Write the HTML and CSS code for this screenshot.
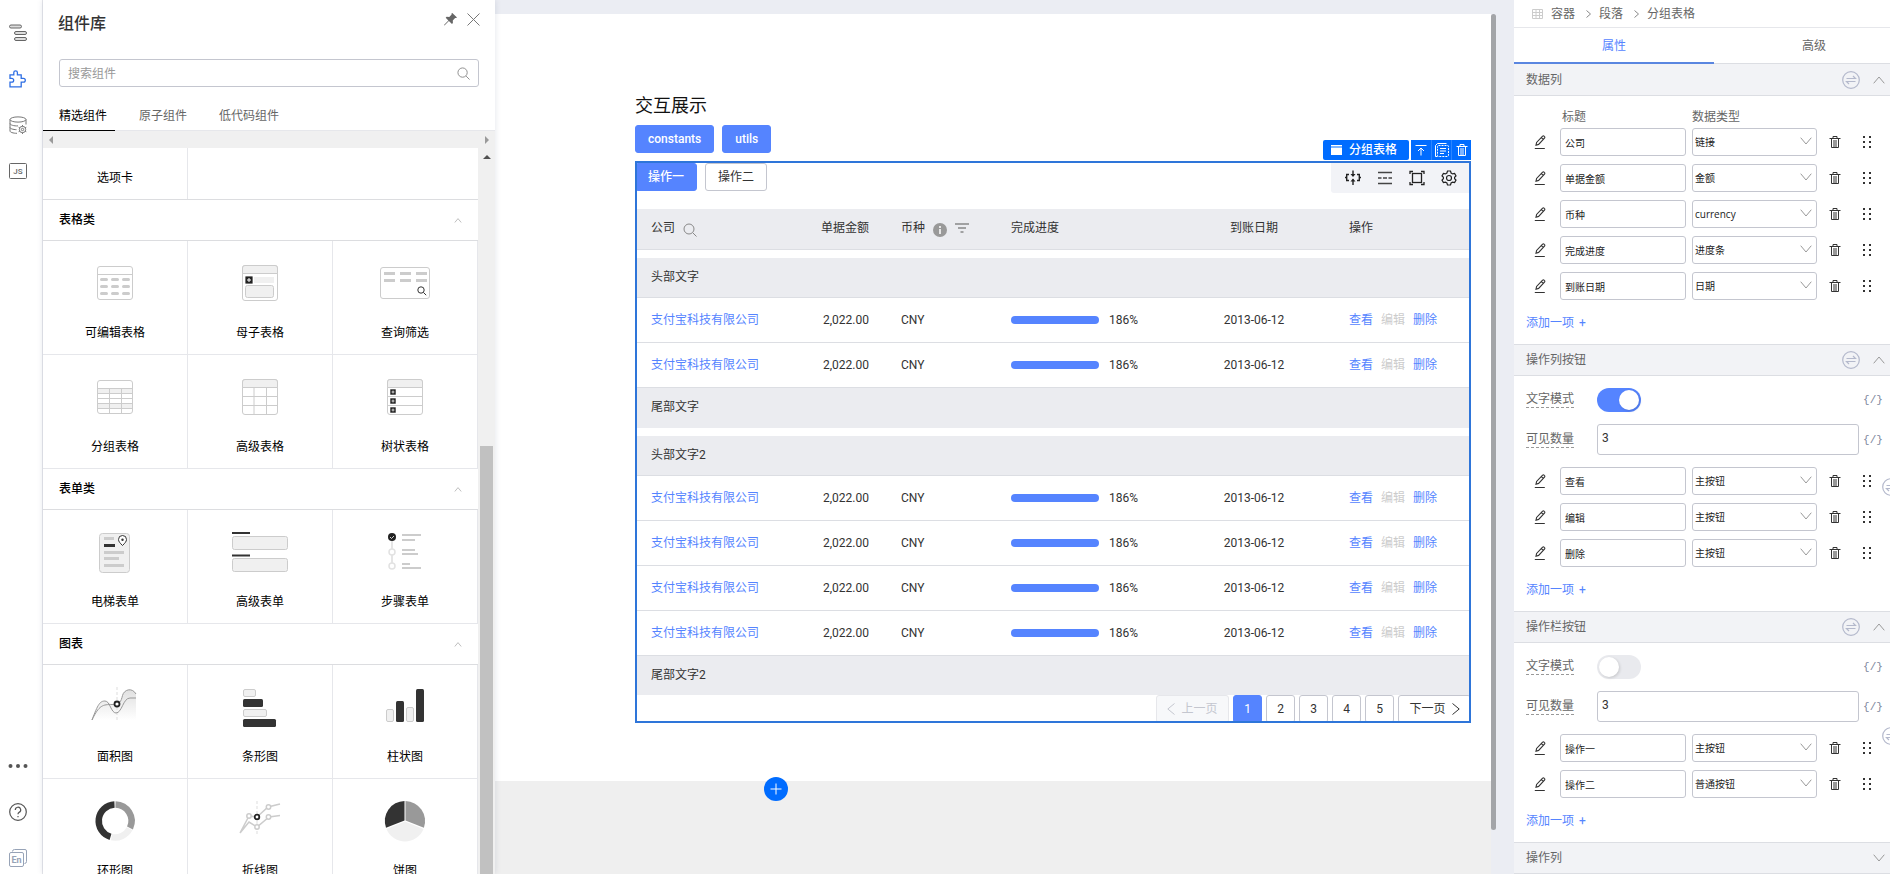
FILE: index.html
```html
<!DOCTYPE html>
<html lang="zh-CN">
<head>
<meta charset="utf-8">
<title>交互展示</title>
<link rel="stylesheet" href="styles.css">
</head>
<body>
<svg class="sprite" aria-hidden="true">
  <symbol id="i-pencil" viewBox="0 0 12 14"><path d="M2 10.2 2.6 7.4 8.6 1.2a1 1 0 0 1 1.5 0l.4.4a1 1 0 0 1 0 1.5L4.6 9.4 2 10.2zM7.4 2.6l1.8 1.8M.8 13.500h10" fill="none" stroke="currentColor" stroke-width="1.1"/></symbol>
  <symbol id="i-trash" viewBox="0 0 12 14"><path d="M.5 3.500h11M4 3.500V1.500h4v2M2.500 3.500v9h7v-9M5 5v7M7 5v7" fill="none" stroke="currentColor"/></symbol>
  <symbol id="i-dots" viewBox="0 0 10 14"><path d="M1 1h2v2H1zM7 1h2v2H7zM1 6h2v2H1zM7 6h2v2H7zM1 11h2v2H1zM7 11h2v2H7z" fill="currentColor"/></symbol>
  <symbol id="i-down" viewBox="0 0 12 8"><path d="M.7.7 6 7 11.300.7" fill="none" stroke="currentColor"/></symbol>
  <symbol id="i-up" viewBox="0 0 12 8"><path d="M.7 7.300 6 1l5.300 6.300" fill="none" stroke="currentColor"/></symbol>
  <symbol id="i-swap" viewBox="0 0 18 18"><g fill="none" stroke="currentColor"><circle cx="9" cy="9" r="8.300" stroke-width="1.200"/><path d="M4.500 7.500h9L11 5M13.500 10.500h-9L7 13" stroke-width="1.200"/></g></symbol>
  <symbol id="i-search" viewBox="0 0 14 14"><path d="M9.800 9.800 13.500 13.500" fill="none" stroke="currentColor"/><circle cx="6" cy="6" r="5" fill="none" stroke="currentColor"/></symbol>
  <symbol id="i-plusbox" viewBox="0 0 8 8"><rect width="8" height="8" rx="1" fill="#222"/><path d="M4 2v4M2 4h4" stroke="#fff"/></symbol>
</svg>
<div class="app">
  <nav class="rail" aria-label="工具">
    <button class="rail-btn" type="button" aria-label="大纲"><svg width="18" height="18" viewBox="0 0 18 18" fill="#ddd" stroke="#666"><rect x=".5" y="1" width="12" height="3" rx="1.500"/><rect x="5.500" y="7.500" width="12" height="3" rx="1.500"/><rect x="5.500" y="13.500" width="12" height="3" rx="1.500"/></svg></button>
    <button class="rail-btn" type="button" aria-label="组件"><svg width="18" height="18" viewBox="0 0 18 18" fill="none" stroke="#2f6fe4" stroke-width="1.300"><path d="M1 4.800h3.800V2.600a1.800 1.800 0 0 1 3.600 0v2.200h3.800v3.600h2.200a1.900 1.900 0 0 1 0 3.800h-2.200v4.600H1v-4.600h1.800a1.900 1.900 0 0 0 0-3.800H1z"/></svg></button>
    <button class="rail-btn" type="button" aria-label="数据源"><svg width="18" height="18" viewBox="0 0 18 18" fill="none" stroke="#777"><ellipse cx="9" cy="3.500" rx="8" ry="2.600"/><path d="M1 3.500v11.500c0 1.200 3 2.300 7 2.300M17 3.500v5M1 7.500c0 1.500 4 2.600 8 2.400M1 11.500c0 1.200 3 2 6.500 2.200"/><circle cx="13.500" cy="13.500" r="3.200"/><circle cx="13.500" cy="13.500" r="1.200"/><path d="M13.500 9v1.500M13.500 16.500V18M9.600 11.300l1.300.7M16 15l1.300.7M9.600 15.700l1.300-.7M16 12l1.300-.7"/></svg></button>
    <button class="rail-btn" type="button" aria-label="脚本"><svg width="18" height="16" viewBox="0 0 18 16"><rect x=".5" y=".5" width="17" height="15" rx="1" fill="none" stroke="#666"/><text x="9" y="11" text-anchor="middle" class="rail-js">JS</text></svg></button>
    <div class="rail-end">
      <button class="rail-btn-small" type="button" aria-label="更多"><svg width="20" height="6" viewBox="0 0 20 6" fill="#555"><circle cx="2.500" cy="3" r="2"/><circle cx="10" cy="3" r="2"/><circle cx="17.500" cy="3" r="2"/></svg></button>
      <button class="rail-btn-small" type="button" aria-label="帮助"><svg width="18" height="18" viewBox="0 0 18 18" fill="none" stroke="#555"><circle cx="9" cy="9" r="8.300" stroke-width="1.200"/><path d="M6.300 7a2.700 2.700 0 1 1 3.800 2.400c-.8.400-1.100.9-1.100 1.900M9 13v1.300" stroke-width="1.200"/></svg></button>
      <button class="rail-btn-small" type="button" aria-label="语言"><svg width="18" height="18" viewBox="0 0 18 18"><path d="M3.500 2.500a2 2 0 0 1 2-2H16a1.500 1.500 0 0 1 1.500 1.500v10.500a2 2 0 0 1-2 2" fill="none" stroke="#97a3b7"/><rect x=".5" y="3.500" width="14" height="14" rx="1.500" fill="none" stroke="#97a3b7"/><text x="7.500" y="14" text-anchor="middle" class="rail-en">En</text></svg></button>
    </div>
  </nav>

  <aside class="library">
    <header class="library-head">
      <h1 class="library-title">组件库</h1>
      <div class="library-tools">
        <button class="plain" type="button" aria-label="固定"><svg width="13" height="13" viewBox="0 0 13 13" fill="#666"><path d="M8.300 0 13 4.500l-.9.600-1-.2-2.300 2.500.1 2.600-.9.900-3.100-2.900L.5 12.500 0 12l4.400-4.600L1.700 4.700l.9-.9 2.700.1 2.300-2.300-.1-1z"/></svg></button>
        <button class="plain" type="button" aria-label="关闭"><svg width="13" height="13" viewBox="0 0 13 13" stroke="#777" fill="none"><path d="m.5.5 12 12M12.500.5l-12 12"/></svg></button>
      </div>
    </header>
    <div class="search">
      <input class="search-input" type="text" placeholder="搜索组件" aria-label="搜索组件">
      <svg class="search-icon" width="13" height="13"><use href="#i-search"/></svg>
    </div>
    <div class="lib-tabs">
      <button class="lib-tab is-on" type="button">精选组件</button>
      <button class="lib-tab" type="button">原子组件</button>
      <button class="lib-tab" type="button">低代码组件</button>
    </div>
    <div class="hbar"><svg width="4" height="8" viewBox="0 0 4 8" fill="#9a9a9a"><path d="M4 0v8L0 4z"/></svg><svg width="4" height="8" viewBox="0 0 4 8" fill="#9a9a9a"><path d="M0 0v8l4-4z"/></svg></div>
    <div class="lib-scroll">
      <div class="lib-list">
        <div class="grid grid-short"><button class="cell cell-short" type="button"><span>选项卡</span></button></div>
        <h2 class="group-title">表格类 <svg width="8" height="5" viewBox="0 0 12 8"><use href="#i-up"/></svg></h2>
        <div class="grid">
          <button class="cell" type="button"><svg class="pic" viewBox="0 0 60 40" fill="none" stroke="#ccc"><rect x="12.500" y="3.500" width="35" height="33" rx="2.500"/><path d="M12.500 11.500h35"/><path stroke-width="3" stroke-linecap="round" d="M16.500 16.500h5M27.500 16.500h5M38.500 16.500h5M16.500 23.500h5M27.500 23.500h5M38.500 23.500h5M16.500 30.500h5M27.500 30.500h5M38.500 30.500h5"/></svg><span>可编辑表格</span></button>
          <button class="cell" type="button"><svg class="pic" viewBox="0 0 60 40" fill="none" stroke="#ccc"><rect x="12.500" y="2.500" width="35" height="35" rx="2.500"/><path d="M12.500 10.500V5a2.500 2.500 0 0 1 2.500-2.500h30A2.500 2.500 0 0 1 47.500 5v5.500z" fill="#f0f0f0"/><path d="M24 17h20" stroke="#f0f0f0" stroke-width="6"/><rect x="15.500" y="22.500" width="28" height="12" rx="2" fill="#f0f0f0"/><use href="#i-plusbox" x="15" y="13" width="8" height="8"/></svg><span>母子表格</span></button>
          <button class="cell" type="button"><svg class="pic" viewBox="0 0 60 40" fill="none" stroke="#ccc"><rect x="5.500" y="4.500" width="49" height="31" rx="2.500"/><path stroke-width="3" d="M9 10.500h11M25 10.500h11M41 10.500h11M9 17.500h11M25 17.500h11M41 17.500h11"/><g stroke="#333"><circle cx="46" cy="27" r="3.200"/><path d="m48.500 29.500 2.700 2.700"/></g></svg><span>查询筛选</span></button>
          <button class="cell" type="button"><svg class="pic" viewBox="0 0 60 40" fill="none" stroke="#ccc"><path d="M13 14h34M13 29h34" stroke="#f0f0f0" stroke-width="5"/><rect x="12.500" y="3.500" width="35" height="33" rx="2.500"/><path d="M12.500 11.500h35M12.500 16.500h35M12.500 21.500h35M12.500 26.500h35M12.500 31.500h35M24.500 11.500v25M36.500 11.500v25"/></svg><span>分组表格</span></button>
          <button class="cell" type="button"><svg class="pic" viewBox="0 0 60 40" fill="none" stroke="#ccc"><rect x="12.500" y="2.500" width="35" height="35" rx="2.500"/><path d="M12.500 10.500V5a2.500 2.500 0 0 1 2.500-2.500h30A2.500 2.500 0 0 1 47.500 5v5.500z" fill="#f0f0f0"/><path d="M12.500 19.500h35M12.500 28.500h35M24 10.500v27M36.500 10.500v27"/></svg><span>高级表格</span></button>
          <button class="cell" type="button"><svg class="pic" viewBox="0 0 60 40" fill="none" stroke="#ccc"><rect x="12.500" y="2.500" width="35" height="35" rx="2.500"/><path d="M12.500 10.500V5a2.500 2.500 0 0 1 2.500-2.500h30A2.500 2.500 0 0 1 47.500 5v5.500z" fill="#f0f0f0"/><path d="M12.500 19.500h35M12.500 28.500h35"/><use href="#i-plusbox" x="15" y="12" width="6" height="6"/><use href="#i-plusbox" x="15" y="21" width="6" height="6"/><use href="#i-plusbox" x="15" y="30" width="6" height="6"/></svg><span>树状表格</span></button>
        </div>
        <h2 class="group-title">表单类 <svg width="8" height="5" viewBox="0 0 12 8"><use href="#i-up"/></svg></h2>
        <div class="grid">
          <button class="cell" type="button"><svg class="pic" viewBox="0 0 60 40" fill="none" stroke="#ccc"><rect x="14.500" y="1.500" width="30" height="39" rx="3" fill="#f0f0f0"/><path stroke-width="3" d="M19 6.500h10M19 20.500h20M19 26.500h15M19 33.500h20"/><path stroke="#333" stroke-width="3" d="M19 13.500h11"/><path stroke="#333" d="M37.500 13.500c-2.500-2.500-4-4-4-6a4 4 0 0 1 8 0c0 2-1.500 3.500-4 6z" fill="#fff"/><circle cx="37.500" cy="7.700" r="1.200" fill="#333" stroke="none"/></svg><span>电梯表单</span></button>
          <button class="cell" type="button"><svg class="pic" viewBox="0 0 60 40" fill="#f0f0f0" stroke="#ccc"><rect x="2.500" y="4.500" width="55" height="13" rx="2"/><rect x="2.500" y="26.500" width="55" height="13" rx="2"/><path stroke="#333" stroke-width="2" d="M2 1h18M2 23.500h18"/></svg><span>高级表单</span></button>
          <button class="cell" type="button"><svg class="pic" viewBox="0 0 60 40" fill="#fff" stroke="#ccc"><path stroke="#ddd" d="M17 8v26" stroke-width="1.500"/><path stroke-width="1.800" d="M27 3h19M27 8h13M27 18h13M27 22h16M27 32h8M27 36h19"/><circle cx="17" cy="5" r="4" fill="#222" stroke="none"/><path d="m15 5 1.500 1.500L19 4" fill="none" stroke="#fff" stroke-width=".8"/><circle cx="17" cy="20" r="3" stroke="#e2e2e2" stroke-width="1.500"/><circle cx="17" cy="34" r="3" stroke="#e2e2e2" stroke-width="1.500"/></svg><span>步骤表单</span></button>
        </div>
        <h2 class="group-title">图表 <svg width="8" height="5" viewBox="0 0 12 8"><use href="#i-up"/></svg></h2>
        <div class="grid">
          <button class="cell" type="button"><svg class="pic" viewBox="0 0 60 40" fill="none" stroke="#999"><defs><linearGradient id="fade" x1="0" y1="0" x2="0" y2="1"><stop offset="0" stop-color="#e0e0e0"/><stop offset="1" stop-color="#fff"/></linearGradient></defs><path d="M7 33C13 17 15 14 20 14c4 0 5 3 8 3.500 8 0 8-3 9.500-9S47 0 51 7v26z" fill="url(#fade)" stroke="none"/><path d="M32 0v34" stroke="#ddd" stroke-dasharray="3 2"/><path d="M7 33C13 17 15 14 20 14s6 12 11 12c6 0 7-15 14-15h6M7 33C14 18 18 17.500 27 17.500c8 0 9-3 10.500-9S47 0 51 7"/><circle cx="32" cy="17" r="2.500" stroke="#222" stroke-width="1.800" fill="#fff"/></svg><span>面积图</span></button>
          <button class="cell" type="button"><svg class="pic" viewBox="0 0 60 40" fill="#f0f0f0" stroke="#ccc"><rect x="13.500" y="2.500" width="12" height="7" rx="1.500"/><rect x="13.500" y="22.500" width="23" height="7" rx="1.500"/><g fill="#333" stroke="none"><rect x="13" y="12" width="20" height="8" rx="1.500"/><rect x="13" y="32" width="33" height="8" rx="1.500"/></g></svg><span>条形图</span></button>
          <button class="cell" type="button"><svg class="pic" viewBox="0 0 60 40" fill="#f0f0f0" stroke="#ccc"><rect x="11.500" y="22.500" width="7" height="12" rx="1.500"/><rect x="31.500" y="20.500" width="7" height="14" rx="1.500"/><g fill="#333" stroke="none"><rect x="21" y="14" width="8" height="21" rx="1.500"/><rect x="41" y="2" width="8" height="33" rx="1.500"/></g></svg><span>柱状图</span></button>
          <button class="cell" type="button"><svg class="pic" viewBox="0 0 60 40" fill="none" stroke-width="6.500"><path stroke="#999" d="M30.500 3.500A16.500 16.500 0 0 1 45 27"/><path stroke="#f0f0f0" d="M44.600 27.700A16.500 16.500 0 0 1 26.500 36.100"/><path stroke="#333" d="M25.500 35.800A16.500 16.500 0 0 1 29.500 3.500"/></svg><span>环形图</span></button>
          <button class="cell" type="button"><svg class="pic" viewBox="0 0 60 40" fill="none" stroke="#ccc" stroke-width="1.500"><path d="M27 0v34" stroke="#ddd" stroke-width="1" stroke-dasharray="3 2"/><path d="m10 32 9-17 8 1 11-10 12-3M10 32l9-11 8 5 12-10 11-1.500"/><g fill="#fff"><circle cx="19" cy="15" r="2.200"/><circle cx="38.500" cy="6" r="2.200"/><circle cx="27" cy="26" r="2.200"/><circle cx="38.500" cy="16" r="2.200"/><circle cx="27" cy="16" r="2.300" stroke="#222" stroke-width="1.800"/></g></svg><span>折线图</span></button>
          <button class="cell" type="button"><svg class="pic" viewBox="0 0 60 40"><path fill="#999" d="M30.500 0A20 20 0 0 1 48.900 26.800L30.500 19.500z"/><path fill="#f0f0f0" d="M48.500 28A20 20 0 0 1 11.500 28L30 20.500z"/><path fill="#333" d="M11 26.800A20 20 0 0 1 29.500 0v19.500z"/></svg><span>饼图</span></button>
        </div>
      </div>
      <div class="vbar"><svg width="8" height="4" viewBox="0 0 8 4" fill="#505050"><path d="M4 0 8 4H0z"/></svg><div class="vbar-thumb"></div></div>
    </div>
  </aside>

  <main class="stage">
    <div class="page">
      <h2 class="page-title">交互展示</h2>
      <div class="btn-row"><button class="btn btn-main" type="button">constants</button><button class="btn btn-main" type="button">utils</button></div>
      <section class="picked">
        <div class="picked-frame"></div>
        <div class="picked-bar">
          <span class="picked-name"><svg width="11" height="10" viewBox="0 0 11 10" fill="#fff"><path d="M0 0h11v1.500H0zM0 2.500h11V10H0z"/></svg>分组表格</span>
          <span class="picked-acts">
            <button class="picked-act" type="button" aria-label="选择父级"><svg width="12" height="12" viewBox="0 0 12 12" fill="none" stroke="#fff"><path d="M.5 1.500h11M6 11.500V4M3 7l3-3 3 3"/></svg></button>
            <button class="picked-act" type="button" aria-label="复制"><svg width="14" height="14" viewBox="0 0 14 14" fill="none" stroke="#fff"><path d="M2.500 13.500h-2v-11l2-2h9"/><rect x="2.500" y="2.500" width="11" height="11" rx="1" stroke-dasharray="2 1"/><path d="M5 5.500h6M5 8h6M5 10.500h4"/></svg></button>
            <button class="picked-act" type="button" aria-label="删除组件"><svg width="12" height="14"><use href="#i-trash"/></svg></button>
          </span>
        </div>
        <div class="tbl-top">
          <div class="btn-row"><button class="btn btn-main" type="button">操作一</button><button class="btn" type="button">操作二</button></div>
          <div class="tbl-tools">
            <button class="plain" type="button" aria-label="列宽"><svg width="16" height="16" viewBox="0 0 16 16" fill="none" stroke="#222" stroke-width="1.400"><path d="M4 4.500H1.700v6H4M12 4.500h2.300v6H12M0 7.500h2M14 7.500h2M8 .5V6M8 15V9.500"/><path d="M5.500 4h5L8 7zM5.500 11.500h5L8 8.500z" fill="#222" stroke="none"/></svg></button>
            <button class="plain" type="button" aria-label="密度"><svg width="16" height="16" viewBox="0 0 16 16" fill="none" stroke="#444" stroke-width="1.500"><path d="M1 2.500h14M1 13.500h14M1 8h3.500M6 8h4M11.500 8H15"/></svg></button>
            <button class="plain" type="button" aria-label="全屏"><svg width="16" height="16" viewBox="0 0 16 16" fill="none" stroke="#222" stroke-width="1.300"><rect x="3.500" y="3.500" width="9" height="9"/><path d="M1 4V1.500h3M12 1.500h3V4M15 12v2.500h-3M4 14.500H1V12"/></svg></button>
            <button class="plain" type="button" aria-label="设置"><svg width="16" height="16" viewBox="0 0 16 16" fill="none" stroke="#222" stroke-width="1.200"><path d="M6.500 1h3l.6 2 1.500.9 2-.5 1.400 2.500L13.600 7.300v1.400L15 10.100l-1.400 2.500-2-.5-1.500.9-.6 2h-3l-.6-2-1.500-.9-2 .5L1 10.100l1.400-1.400V7.300L1 5.900l1.400-2.500 2 .5 1.500-.9z"/><circle cx="8" cy="8" r="2.500"/></svg></button>
          </div>
        </div>
        <table class="data">
          <colgroup><col class="c-company"><col class="c-amount"><col class="c-cur"><col class="c-prog"><col class="c-date"><col class="c-ops"></colgroup>
          <thead><tr><th><span class="th-in">公司 <svg class="th-ico" width="14" height="14"><use href="#i-search"/></svg></span></th><th class="num">单据金额</th><th><span class="th-in">币种 <svg class="th-ico" width="14" height="14" viewBox="0 0 14 14"><circle cx="7" cy="7" r="7" fill="#999"/><path d="M7 3v2M7 6v5" stroke="#fff" stroke-width="1.500"/></svg><svg width="14" height="10" viewBox="0 0 14 10" stroke="#888" stroke-width="1.300"><path d="M0 1h14M3 5h8M5.500 9h3"/></svg></span></th><th>完成进度</th><th class="mid">到账日期</th><th>操作</th></tr></thead>
          <tbody>
            <tr class="gap"><td colspan="6"></td></tr>
            <tr class="band"><td colspan="6">头部文字</td></tr>
            <tr class="row"><td><a href="#">支付宝科技有限公司</a></td><td class="num">2,022.00</td><td>CNY</td><td><span class="prog"><span class="prog-bar"></span>186%</span></td><td class="mid">2013-06-12</td><td><span class="ops"><a href="#">查看</a><span class="off">编辑</span><a href="#">删除</a></span></td></tr>
            <tr class="row"><td><a href="#">支付宝科技有限公司</a></td><td class="num">2,022.00</td><td>CNY</td><td><span class="prog"><span class="prog-bar"></span>186%</span></td><td class="mid">2013-06-12</td><td><span class="ops"><a href="#">查看</a><span class="off">编辑</span><a href="#">删除</a></span></td></tr>
            <tr class="band band-end"><td colspan="6">尾部文字</td></tr>
          </tbody>
          <tbody class="last">
            <tr class="gap"><td colspan="6"></td></tr>
            <tr class="band"><td colspan="6">头部文字2</td></tr>
            <tr class="row"><td><a href="#">支付宝科技有限公司</a></td><td class="num">2,022.00</td><td>CNY</td><td><span class="prog"><span class="prog-bar"></span>186%</span></td><td class="mid">2013-06-12</td><td><span class="ops"><a href="#">查看</a><span class="off">编辑</span><a href="#">删除</a></span></td></tr>
            <tr class="row"><td><a href="#">支付宝科技有限公司</a></td><td class="num">2,022.00</td><td>CNY</td><td><span class="prog"><span class="prog-bar"></span>186%</span></td><td class="mid">2013-06-12</td><td><span class="ops"><a href="#">查看</a><span class="off">编辑</span><a href="#">删除</a></span></td></tr>
            <tr class="row"><td><a href="#">支付宝科技有限公司</a></td><td class="num">2,022.00</td><td>CNY</td><td><span class="prog"><span class="prog-bar"></span>186%</span></td><td class="mid">2013-06-12</td><td><span class="ops"><a href="#">查看</a><span class="off">编辑</span><a href="#">删除</a></span></td></tr>
            <tr class="row"><td><a href="#">支付宝科技有限公司</a></td><td class="num">2,022.00</td><td>CNY</td><td><span class="prog"><span class="prog-bar"></span>186%</span></td><td class="mid">2013-06-12</td><td><span class="ops"><a href="#">查看</a><span class="off">编辑</span><a href="#">删除</a></span></td></tr>
            <tr class="band band-end"><td colspan="6">尾部文字2</td></tr>
          </tbody>
        </table>
        <nav class="pager" aria-label="分页">
          <button class="pg pg-wide" type="button" disabled><svg width="8" height="12" viewBox="0 0 8 12" fill="none" stroke="currentColor"><path d="M7.500.5.8 6l6.700 5.500"/></svg>上一页</button>
          <button class="pg is-on" type="button">1</button><button class="pg" type="button">2</button><button class="pg" type="button">3</button><button class="pg" type="button">4</button><button class="pg" type="button">5</button>
          <button class="pg pg-wide" type="button">下一页<svg width="8" height="12" viewBox="0 0 8 12" fill="none" stroke="currentColor"><path d="M.5.500 7.200 6 .5 11.500"/></svg></button>
        </nav>
      </section>
      <button class="add-block" type="button" aria-label="添加区块"><svg width="12" height="12" viewBox="0 0 12 12" stroke="#fff"><path d="M6 .5v11M.5 6h11"/></svg></button>
    </div>
    <div class="stage-bar"></div>
  </main>

  <aside class="props">
    <div class="props-in">
      <nav class="crumbs" aria-label="路径"><svg width="11" height="10" viewBox="0 0 11 10" fill="none" stroke="#ccc"><path d="M.5.5h10v9H.5zM0 3.500h11M0 6.500h11M4 .5v9M7.500.5v9"/></svg><a href="#">容器</a><svg width="5" height="8" viewBox="0 0 5 8" fill="none" stroke="#888"><path d="m.5.500 4 3.500-4 3.500"/></svg><a href="#">段落</a><svg width="5" height="8" viewBox="0 0 5 8" fill="none" stroke="#888"><path d="m.5.500 4 3.500-4 3.500"/></svg><a href="#">分组表格</a></nav>
      <div class="props-tabs"><button class="props-tab is-on" type="button">属性</button><button class="props-tab" type="button">高级</button></div>

      <h3 class="sec">数据列 <svg class="sec-swap" width="18" height="18"><use href="#i-swap"/></svg><svg width="12" height="8"><use href="#i-up"/></svg></h3>
      <div class="body">
        <div class="heads"><span class="head-a">标题</span><span>数据类型</span></div>
        <div class="items">
          <div class="item"><button class="plain" type="button" aria-label="编辑项"><svg width="12" height="14"><use href="#i-pencil"/></svg></button><input class="field" type="text" value="公司" aria-label="标题"><span class="pick"><select class="field" aria-label="类型"><option>链接</option></select><svg width="12" height="8"><use href="#i-down"/></svg></span><button class="plain" type="button" aria-label="删除项"><svg width="12" height="14"><use href="#i-trash"/></svg></button><button class="plain" type="button" aria-label="拖动"><svg width="10" height="14"><use href="#i-dots"/></svg></button></div>
          <div class="item"><button class="plain" type="button" aria-label="编辑项"><svg width="12" height="14"><use href="#i-pencil"/></svg></button><input class="field" type="text" value="单据金额" aria-label="标题"><span class="pick"><select class="field" aria-label="类型"><option>金额</option></select><svg width="12" height="8"><use href="#i-down"/></svg></span><button class="plain" type="button" aria-label="删除项"><svg width="12" height="14"><use href="#i-trash"/></svg></button><button class="plain" type="button" aria-label="拖动"><svg width="10" height="14"><use href="#i-dots"/></svg></button></div>
          <div class="item"><button class="plain" type="button" aria-label="编辑项"><svg width="12" height="14"><use href="#i-pencil"/></svg></button><input class="field" type="text" value="币种" aria-label="标题"><span class="pick"><select class="field" aria-label="类型"><option>currency</option></select><svg width="12" height="8"><use href="#i-down"/></svg></span><button class="plain" type="button" aria-label="删除项"><svg width="12" height="14"><use href="#i-trash"/></svg></button><button class="plain" type="button" aria-label="拖动"><svg width="10" height="14"><use href="#i-dots"/></svg></button></div>
          <div class="item"><button class="plain" type="button" aria-label="编辑项"><svg width="12" height="14"><use href="#i-pencil"/></svg></button><input class="field" type="text" value="完成进度" aria-label="标题"><span class="pick"><select class="field" aria-label="类型"><option>进度条</option></select><svg width="12" height="8"><use href="#i-down"/></svg></span><button class="plain" type="button" aria-label="删除项"><svg width="12" height="14"><use href="#i-trash"/></svg></button><button class="plain" type="button" aria-label="拖动"><svg width="10" height="14"><use href="#i-dots"/></svg></button></div>
          <div class="item"><button class="plain" type="button" aria-label="编辑项"><svg width="12" height="14"><use href="#i-pencil"/></svg></button><input class="field" type="text" value="到账日期" aria-label="标题"><span class="pick"><select class="field" aria-label="类型"><option>日期</option></select><svg width="12" height="8"><use href="#i-down"/></svg></span><button class="plain" type="button" aria-label="删除项"><svg width="12" height="14"><use href="#i-trash"/></svg></button><button class="plain" type="button" aria-label="拖动"><svg width="10" height="14"><use href="#i-dots"/></svg></button></div>
        </div>
        <a class="more" href="#">添加一项 <span>+</span></a>
      </div>

      <h3 class="sec sec-line">操作列按钮 <svg class="sec-swap" width="18" height="18"><use href="#i-swap"/></svg><svg width="12" height="8"><use href="#i-up"/></svg></h3>
      <div class="body">
        <div class="pair"><label class="pair-label" for="text1">文字模式</label><input class="switch" id="text1" type="checkbox" checked><button class="code" type="button">{/}</button></div>
        <div class="pair"><label class="pair-label" for="count1">可见数量</label><input class="count" id="count1" type="text" value="3"><button class="code" type="button">{/}</button></div>
        <div class="items">
          <div class="item"><button class="plain" type="button" aria-label="编辑项"><svg width="12" height="14"><use href="#i-pencil"/></svg></button><input class="field" type="text" value="查看" aria-label="标题"><span class="pick"><select class="field" aria-label="类型"><option>主按钮</option></select><svg width="12" height="8"><use href="#i-down"/></svg></span><button class="plain" type="button" aria-label="删除项"><svg width="12" height="14"><use href="#i-trash"/></svg></button><button class="plain" type="button" aria-label="拖动"><svg width="10" height="14"><use href="#i-dots"/></svg></button></div>
          <div class="item"><button class="plain" type="button" aria-label="编辑项"><svg width="12" height="14"><use href="#i-pencil"/></svg></button><input class="field" type="text" value="编辑" aria-label="标题"><span class="pick"><select class="field" aria-label="类型"><option>主按钮</option></select><svg width="12" height="8"><use href="#i-down"/></svg></span><button class="plain" type="button" aria-label="删除项"><svg width="12" height="14"><use href="#i-trash"/></svg></button><button class="plain" type="button" aria-label="拖动"><svg width="10" height="14"><use href="#i-dots"/></svg></button></div>
          <div class="item"><button class="plain" type="button" aria-label="编辑项"><svg width="12" height="14"><use href="#i-pencil"/></svg></button><input class="field" type="text" value="删除" aria-label="标题"><span class="pick"><select class="field" aria-label="类型"><option>主按钮</option></select><svg width="12" height="8"><use href="#i-down"/></svg></span><button class="plain" type="button" aria-label="删除项"><svg width="12" height="14"><use href="#i-trash"/></svg></button><button class="plain" type="button" aria-label="拖动"><svg width="10" height="14"><use href="#i-dots"/></svg></button></div>
          <svg class="items-swap" width="18" height="18"><use href="#i-swap"/></svg>
        </div>
        <a class="more" href="#">添加一项 <span>+</span></a>
      </div>

      <h3 class="sec sec-line">操作栏按钮 <svg class="sec-swap" width="18" height="18"><use href="#i-swap"/></svg><svg width="12" height="8"><use href="#i-up"/></svg></h3>
      <div class="body">
        <div class="pair"><label class="pair-label" for="text2">文字模式</label><input class="switch" id="text2" type="checkbox"><button class="code" type="button">{/}</button></div>
        <div class="pair"><label class="pair-label" for="count2">可见数量</label><input class="count" id="count2" type="text" value="3"><button class="code" type="button">{/}</button></div>
        <div class="items">
          <div class="item"><button class="plain" type="button" aria-label="编辑项"><svg width="12" height="14"><use href="#i-pencil"/></svg></button><input class="field" type="text" value="操作一" aria-label="标题"><span class="pick"><select class="field" aria-label="类型"><option>主按钮</option></select><svg width="12" height="8"><use href="#i-down"/></svg></span><button class="plain" type="button" aria-label="删除项"><svg width="12" height="14"><use href="#i-trash"/></svg></button><button class="plain" type="button" aria-label="拖动"><svg width="10" height="14"><use href="#i-dots"/></svg></button></div>
          <div class="item"><button class="plain" type="button" aria-label="编辑项"><svg width="12" height="14"><use href="#i-pencil"/></svg></button><input class="field" type="text" value="操作二" aria-label="标题"><span class="pick"><select class="field" aria-label="类型"><option>普通按钮</option></select><svg width="12" height="8"><use href="#i-down"/></svg></span><button class="plain" type="button" aria-label="删除项"><svg width="12" height="14"><use href="#i-trash"/></svg></button><button class="plain" type="button" aria-label="拖动"><svg width="10" height="14"><use href="#i-dots"/></svg></button></div>
          <svg class="items-swap" width="18" height="18"><use href="#i-swap"/></svg>
        </div>
        <a class="more" href="#">添加一项 <span>+</span></a>
      </div>
      <h3 class="sec sec-line">操作列 <svg class="sec-swap" width="12" height="8"><use href="#i-down"/></svg></h3>
    </div>
  </aside>
</div>
</body>
</html>
```
FILE: styles.css
```css
* { box-sizing: border-box; }
body {
  margin: 0;
  font: 12px/18px Roboto, "Noto Sans CJK SC", sans-serif;
  color: #333;
  background: #ebedf3;
}
button, input, select { font: inherit; color: inherit; margin: 0; }
button { padding: 0; border: 0; background: none; }
h1, h2, h3 { margin: 0; font-weight: 400; }
a { color: #5584ff; text-decoration: none; }
svg { flex: none; display: block; }
.sprite { position: absolute; width: 0; height: 0; }
.plain { display: flex; align-items: center; justify-content: center; }

.app { display: flex; height: 100vh; overflow: hidden; }

/* icon rail */
.rail {
  flex: none;
  width: 43px;
  padding: 10px 6px 0 0;
  display: flex;
  flex-direction: column;
  background: #fff;
  border-right: 1px solid #e6e7eb;
}
.rail-btn, .rail-btn-small { display: flex; align-items: center; justify-content: center; height: 46px; }
.rail-btn-small { height: 32px; }
.rail-end { margin-top: auto; display: flex; flex-direction: column; gap: 14px; }
.rail-js { font: 500 8px Roboto, sans-serif; fill: #666; }
.rail-en { font: 700 9px Roboto, sans-serif; fill: #97a3b7; }

/* component library */
.library {
  flex: none;
  width: 452px;
  display: flex;
  flex-direction: column;
  background: #fff;
  box-shadow: 0 0 6px rgba(60, 70, 110, .15);
  z-index: 1;
}
.library-head { display: flex; justify-content: space-between; padding: 10px 15px 0; height: 59px; }
.library-title { font-size: 16px; line-height: 28px; font-weight: 500; }
.library-tools { display: flex; gap: 10px; height: 18px; }
.search { position: relative; margin: 0 16px; }
.search-input {
  display: block;
  width: 100%;
  height: 28px;
  padding: 1px 32px 0 8px;
  border: 1px solid #c4c6cf;
  border-radius: 3px;
  background: #fff;
}
.search-input::placeholder { color: #999; }
.search-icon { position: absolute; right: 9px; top: 8px; color: #888; }
.lib-tabs { display: flex; gap: 32px; height: 44px; padding: 0 16px; border-bottom: 1px solid #e6e7eb; }
.lib-tab { color: #666; padding-top: 14px; border-bottom: 1px solid transparent; margin-bottom: -1px; }
.lib-tab.is-on { color: #000; border-color: #000; margin-left: -16px; padding-left: 16px; padding-right: 8px; margin-right: -8px; }
.hbar { flex: none; display: flex; align-items: center; justify-content: space-between; height: 17px; padding: 0 6px; background: #f0f0f0; }
.lib-scroll { flex: 1; min-height: 0; display: flex; overflow: hidden; }
.lib-list { flex: 1; }
.vbar { flex: none; width: 17px; padding: 7px 2px 0; display: flex; flex-direction: column; align-items: center; background: #f0f0f0; }
.vbar-thumb { flex: none; width: 13px; height: 428px; margin-top: auto; background: #c1c1c1; }
.group-title {
  display: flex;
  align-items: center;
  justify-content: space-between;
  height: 41px;
  padding: 0 16px;
  border-bottom: 1px solid #dcdde0;
  color: #000;
  font-size: 12px;
  font-weight: 500;
}
.group-title svg { color: #999; }
.grid { display: grid; grid-template-columns: repeat(3, 1fr); }
.grid-short { border-bottom: 1px solid #dcdde0; }
.cell {
  display: flex;
  flex-direction: column;
  align-items: center;
  gap: 21px;
  padding: 22px 0 12px;
  border-right: 1px solid #e6e7eb;
  border-bottom: 1px solid #e6e7eb;
  color: #000;
}
.cell-short { padding-top: 21px; border-bottom: 0; }
.pic { width: 60px; height: 40px; overflow: visible; }

/* stage */
.stage { flex: 1; min-width: 0; display: flex; padding: 14px 18px 0 0; }
.page { position: relative; flex: 1; min-width: 0; padding: 78px 20px 58px 140px; background: #fff; align-self: flex-start; box-shadow: 0 300px #efefef; }
.stage-bar { width: 5px; height: 816px; border-radius: 3px; background: #a3a5a8; }
.page-title { font-size: 18px; line-height: 28px; color: #111; }
.btn-row { display: flex; gap: 8px; }
.page-title + .btn-row { margin-top: 5px; }
.btn { height: 28px; padding: 0 12px; border: 1px solid #c4c6cf; border-radius: 3px; background: #fff; }
.btn-main { border-color: #5584ff; background: #5584ff; color: #fff; font-weight: 500; }
.picked { position: relative; margin-top: 10px; }
.picked-frame { position: absolute; inset: -2px 0 0; border: 2px solid #2e75d9; z-index: 1; pointer-events: none; }
.picked-bar { position: absolute; right: 0; bottom: 100%; display: flex; gap: 2px; margin-bottom: 3px; z-index: 2; color: #fff; }
.picked-name { display: flex; align-items: center; gap: 7px; height: 20px; padding: 0 12px 0 8px; border-radius: 2px; background: #006cff; font-weight: 500; }
.picked-acts { display: flex; background: #006cff; }
.picked-act { display: flex; align-items: center; justify-content: center; width: 20px; height: 20px; }
.picked-act + .picked-act { border-left: 1px solid #2b85ff; }
.tbl-top { display: flex; justify-content: space-between; height: 46px; }
.tbl-tools { display: flex; gap: 16px; height: 30px; padding: 0 14px; border-radius: 0 0 0 3px; background: #f2f3f7; }

.data { width: 100%; table-layout: fixed; border-collapse: separate; border-spacing: 0; }
.c-company { width: 142px; }
.c-amount { width: 108px; }
.c-cur { width: 110px; }
.c-date { width: 158px; }
.c-ops { width: 138px; }
.data th, .data td { padding: 0 16px; text-align: left; font-weight: 400; border-bottom: 1px solid #dcdee3; }
.data th { height: 41px; padding-bottom: 2px; background: #ebecf0; }
.data .num { text-align: right; }
.data .mid { text-align: center; }
.th-in { display: flex; align-items: center; gap: 8px; }
.th-ico { color: #888; margin-top: 4px; }
.gap td { height: 8px; padding: 0; border: 0; }
.band td { height: 40px; padding-bottom: 2px; background: #ebecf0; }
.band-end td { border-bottom: 0; }
.last .band-end td { height: 39px; }
.row td { height: 45px; padding-bottom: 1px; }
.prog { display: flex; align-items: center; gap: 10px; }
.prog-bar { width: 88px; height: 8px; border-radius: 4px; background: #5584ff; }
.ops { display: flex; gap: 8px; }
.off { color: #ccc; }
.pager { display: flex; justify-content: flex-end; gap: 4px; }
.pg { display: flex; align-items: center; justify-content: center; gap: 6px; width: 29px; height: 28px; border: 1px solid #c4c6cf; border-radius: 3px; background: #fff; }
.pg-wide { width: 73px; }
.pg.is-on { border-color: #5584ff; background: #5584ff; color: #fff; }
.pg:disabled { color: #c4c6cf; background: #f7f8fa; border-color: #e6e7eb; }
.add-block { position: absolute; left: 269px; bottom: -20px; display: flex; align-items: center; justify-content: center; width: 24px; height: 24px; border-radius: 50%; background: #006cff; }

/* properties */
.props { flex: none; width: 376px; overflow: hidden; background: #fff; color: #666; }
.props-in { width: 400px; }
.crumbs { display: flex; align-items: center; height: 28px; padding: 0 18px; border-bottom: 1px solid #e6e7eb; }
.crumbs a { color: #666; margin: 0 11px 0 8px; }
.props-tabs { display: flex; height: 36px; border-bottom: 1px solid #dcdee3; }
.props-tab { flex: 1; padding-top: 2px; border-bottom: 2px solid transparent; margin-bottom: -1px; }
.props-tab.is-on { color: #5584ff; border-color: #5a86e0; }
.sec { display: flex; align-items: center; height: 32px; padding: 0 29px 0 12px; gap: 13px; background: #f2f3f6; border-bottom: 1px solid #dcdee3; font-size: 12px; }
.sec-line { border-top: 1px solid #dcdee3; }
.sec svg { color: #999; }
.sec .sec-swap { margin-left: auto; color: #b4b9cc; }
.sec svg:last-child { color: #999; }
.body { display: flex; flex-direction: column; align-items: flex-start; padding: 12px 0; }
.heads { display: flex; height: 20px; padding-left: 48px; }
.head-a { width: 130px; }
.items { position: relative; width: 100%; display: grid; gap: 8px; color: #333; }
.item { display: flex; align-items: center; padding-left: 20px; }
.item > .field { margin: 0 6px 0 14px; }
.item > .pick { margin-right: 12px; }
.item > .plain:last-child { margin-left: 21px; }
.field { width: 126px; height: 28px; padding: 0 4px; border: 1px solid #c4c6cf; border-radius: 3px; background: #fff; font: 10px "Open Sans", "Noto Sans CJK SC", sans-serif; color: #222; }
select.field { display: block; width: 125px; padding: 0 2px; appearance: none; }
.pick { position: relative; }
.pick svg { position: absolute; left: 108px; top: 9px; color: #999; pointer-events: none; }
.items-swap { position: absolute; left: 368px; top: calc(50% - 39px); color: #b4b9cc; }
.more { display: flex; gap: 5px; margin: 14px 12px 0; }
.pair { display: grid; grid-template-columns: 71px 262px 28px; align-items: center; padding-left: 12px; margin-bottom: 12px; }
.pair-label { justify-self: start; line-height: 15px; border-bottom: 1px dashed #999; }
.switch { appearance: none; display: block; width: 44px; height: 24px; border-radius: 12px; background: #e9eaee; }
.switch::before { content: ""; display: block; width: 20px; height: 20px; margin: 2px; border-radius: 50%; background: #fff; box-shadow: 1px 1px 3px rgba(0, 0, 0, .15); }
.switch:checked { background: #5584ff; padding-left: 20px; }
.count { height: 31px; padding: 0 4px 3px; border: 1px solid #c4c6cf; border-radius: 3px; background: #fff; color: #333; }
.code { font: 11px/18px "Liberation Mono", monospace; color: #7d879c; }
```
